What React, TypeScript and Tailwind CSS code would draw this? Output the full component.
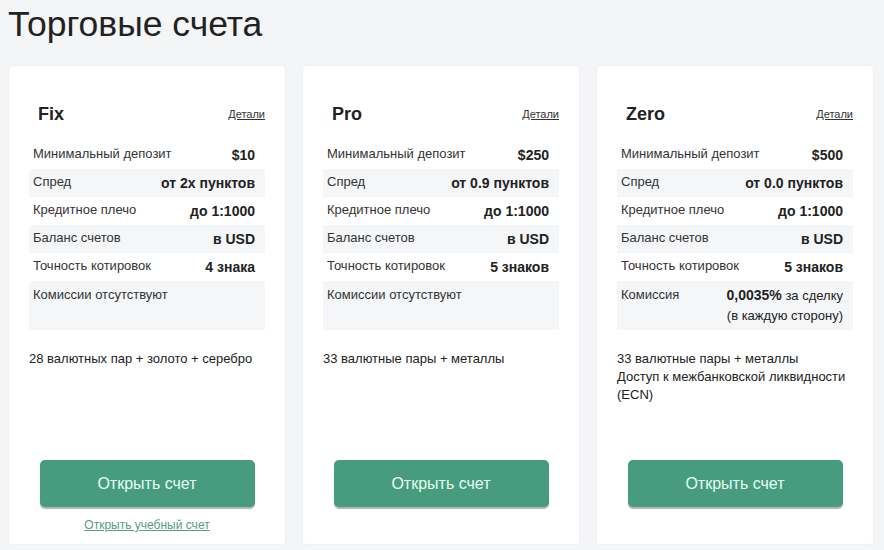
type Row = { label: string; value: React.ReactNode }

type Account = {
  name: string
  rows: Row[]
  commission: { label: string; value: React.ReactNode }
  description: string[]
  demo?: boolean
}

const accounts: Account[] = [
  {
    name: 'Fix',
    rows: [
      { label: 'Минимальный депозит', value: '$10' },
      { label: 'Спред', value: 'от 2х пунктов' },
      { label: 'Кредитное плечо', value: 'до 1:1000' },
      { label: 'Баланс счетов', value: 'в USD' },
      { label: 'Точность котировок', value: '4 знака' },
    ],
    commission: { label: 'Комиссии отсутствуют', value: null },
    description: ['28 валютных пар + золото + серебро'],
    demo: true,
  },
  {
    name: 'Pro',
    rows: [
      { label: 'Минимальный депозит', value: '$250' },
      { label: 'Спред', value: 'от 0.9 пунктов' },
      { label: 'Кредитное плечо', value: 'до 1:1000' },
      { label: 'Баланс счетов', value: 'в USD' },
      { label: 'Точность котировок', value: '5 знаков' },
    ],
    commission: { label: 'Комиссии отсутствуют', value: null },
    description: ['33 валютные пары + металлы'],
  },
  {
    name: 'Zero',
    rows: [
      { label: 'Минимальный депозит', value: '$500' },
      { label: 'Спред', value: 'от 0.0 пунктов' },
      { label: 'Кредитное плечо', value: 'до 1:1000' },
      { label: 'Баланс счетов', value: 'в USD' },
      { label: 'Точность котировок', value: '5 знаков' },
    ],
    commission: {
      label: 'Комиссия',
      value: (
        <>
          <span className="font-bold text-[14px]">0,0035%</span> за сделку
          <br />
          (в каждую сторону)
        </>
      ),
    },
    description: ['33 валютные пары + металлы', 'Доступ к межбанковской ликвидности (ECN)'],
  },
]

function AccountCard({ account }: { account: Account }) {
  return (
    <div className="w-[278px] h-[480px] flex flex-col bg-white rounded-[4px] border border-[#eef0f2] px-[20px] pt-[34px] pb-[12px]">
      {/* Header */}
      <div className="h-[28px] flex items-center justify-between pl-[9px]">
        <h2 className="text-[18px] font-bold text-[#222]">{account.name}</h2>
        <a href="#" className="text-[11px] text-[#333] underline">
          Детали
        </a>
      </div>

      {/* Conditions table */}
      <div className="mt-[13px]">
        {account.rows.map((row, i) => (
          <div
            key={row.label}
            className={
              'h-[28px] flex items-center justify-between pl-[4px] pr-[10px] ' +
              (i % 2 === 1 ? 'bg-[#f4f6f8]' : 'bg-white')
            }
          >
            <span className="text-[13px] text-[#333] -mt-[3px]">{row.label}</span>
            <span className="text-[14px] font-bold text-[#222]">{row.value}</span>
          </div>
        ))}
        <div className="h-[49px] flex justify-between pl-[4px] pr-[10px] pt-[4px] bg-[#f4f6f8]">
          <span className="text-[13px] leading-5 text-[#333]">{account.commission.label}</span>
          {account.commission.value && (
            <span className="text-[13px] leading-5 text-right text-[#222]">{account.commission.value}</span>
          )}
        </div>
      </div>

      {/* Description */}
      <div className="flex-1 mt-[20px] text-[13px] leading-[18px] text-[#222]">
        {account.description.map((line) => (
          <p key={line}>{line}</p>
        ))}
      </div>

      <button className="mx-auto w-[215px] h-[47px] rounded-[5px] bg-[#479b7f] text-[16px] text-[#e6fff3] shadow-[0_2px_1px_rgba(0,0,0,0.3)]">
        Открыть счет
      </button>
      <div className="mt-[9px] h-[16px] text-center leading-4">
        {account.demo && (
          <a href="#" className="text-[12px] text-[#5b9c86] underline">
            Открыть учебный счет
          </a>
        )}
      </div>
    </div>
  )
}

export default function App() {
  return (
    <div className="min-h-screen w-full bg-[#f4f5f7] px-[8px] font-['Liberation_Sans',Arial,sans-serif]">
      <h1 className="text-[35.5px] leading-[48px] text-[#222]">Торговые счета</h1>
      <div className="mt-[17px] flex gap-[16px]">
        {accounts.map((a) => (
          <AccountCard key={a.name} account={a} />
        ))}
      </div>
    </div>
  )
}
